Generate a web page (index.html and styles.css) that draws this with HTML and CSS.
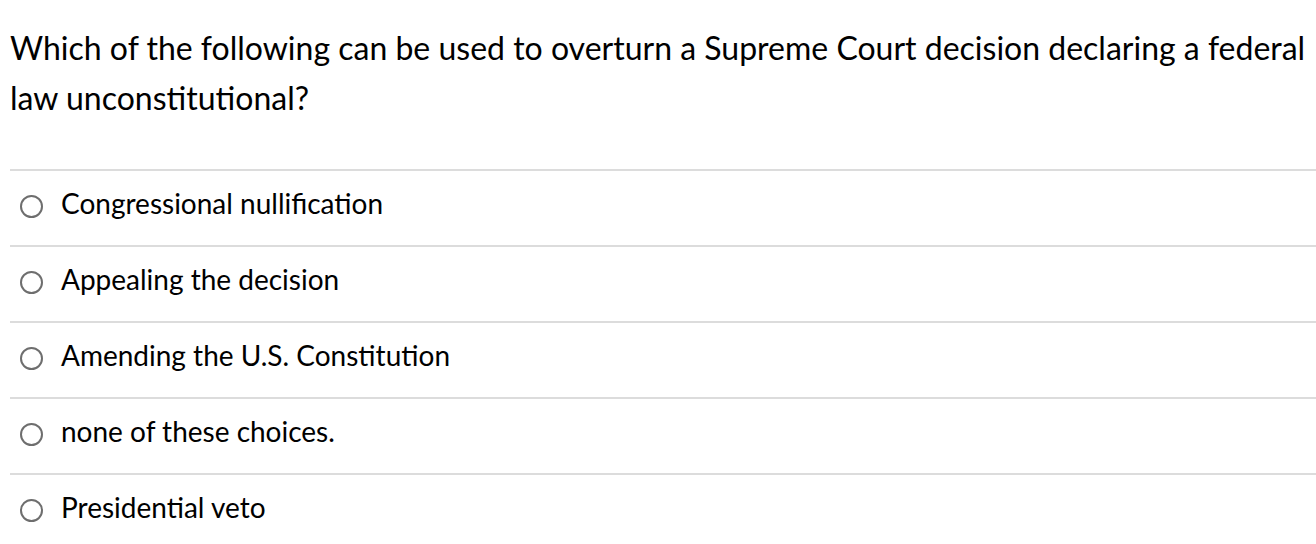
FILE: index.html
```html
<!DOCTYPE html>
<html>
<head>
<meta charset="utf-8">
<link rel="stylesheet" href="styles.css">
</head>
<body>
<div class="quiz">
  <div class="question">Which of the following can be used to overturn a Supreme Court decision declaring a federal law unconstitutional?</div>
  <div class="answers">
    <label class="answer"><span class="radio"></span><span class="text">Congressional nullification</span></label>
    <label class="answer"><span class="radio"></span><span class="text">Appealing the decision</span></label>
    <label class="answer"><span class="radio"></span><span class="text">Amending the U.S. Constitution</span></label>
    <label class="answer"><span class="radio"></span><span class="text">none of these choices.</span></label>
    <label class="answer"><span class="radio"></span><span class="text">Presidential veto</span></label>
  </div>
</div>
</body>
</html>
```
FILE: styles.css
```css
html, body {
  margin: 0;
  padding: 0;
  background: #fff;
}
body {
  font-family: Lato, "Liberation Sans", sans-serif;
  color: #000;
  overflow: hidden;
}
.quiz {
  padding: 23px 0 0 10px;
}
.question {
  font-size: 32px;
  line-height: 50px;
  padding-bottom: 46px;
}
.answers {
  display: flex;
  flex-direction: column;
}
.answer {
  display: flex;
  align-items: center;
  height: 64px;
  padding-bottom: 10px;
  border-top: 2px solid #dcdcdc;
  gap: 18px;
  padding-left: 10px;
  font-size: 28px;
}
.radio {
  width: 19px;
  height: 19px;
  border: 2px solid #6e6e6e;
  border-radius: 50%;
  flex: none;
  margin-top: 6px;
}
```
